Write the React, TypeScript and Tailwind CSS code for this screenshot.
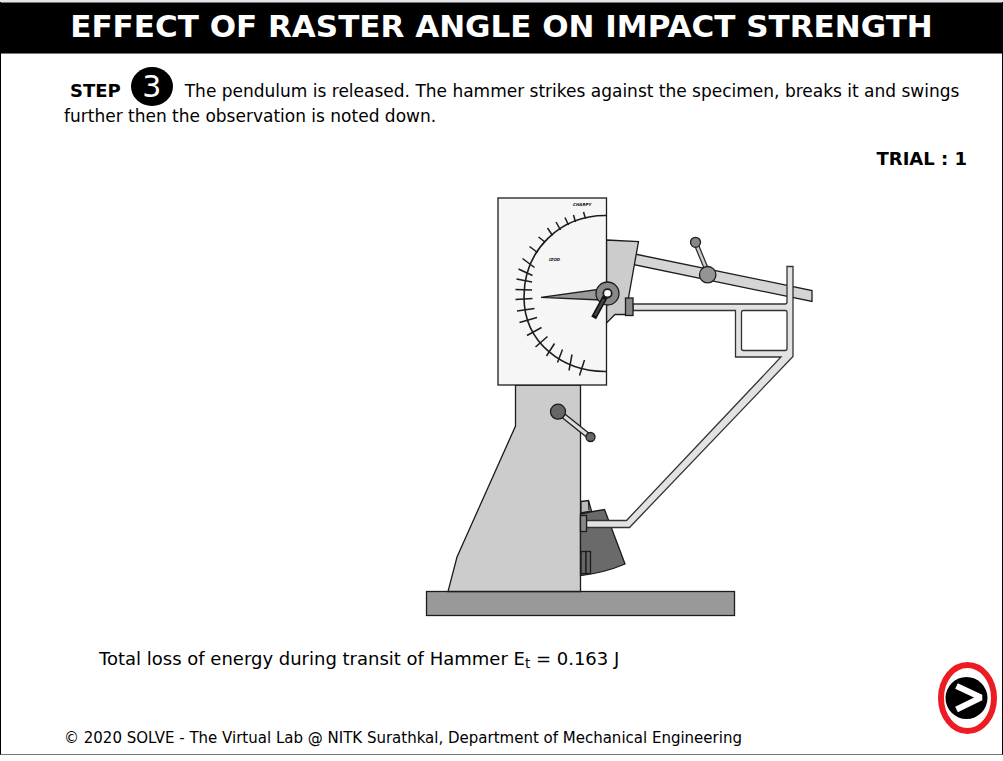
const ticks: [number, number, number, number][] = [
  [583.5, 212, 585.5, 218.5], [573.5, 215, 575.5, 222], [565, 217.5, 568.5, 225],
  [556, 222, 560.5, 230], [547.5, 228, 552.5, 235.5], [538.5, 237, 545, 242],
  [529.5, 246.5, 537.5, 252.5], [522.5, 258.5, 534.5, 267.5], [518.5, 269, 532.5, 275.5],
  [516.5, 279, 532, 282], [515.5, 289.5, 532, 290], [515.5, 299.5, 532.5, 298.5],
  [517, 311, 534.5, 308.5], [519.5, 322.5, 537, 317.5], [527, 335.5, 541.5, 327.5],
  [535.5, 347, 547.5, 336.5], [546.5, 356, 554.5, 343.5], [557.5, 362.5, 562.5, 349.5],
  [569, 370.5, 572, 354.5], [579.5, 375.5, 584.5, 360],
];

function ImpactTester() {
  return (
    <svg
      className="h-[430px] w-[400px] shrink-0"
      viewBox="420 190 400 430"
      role="img"
      aria-label="Pendulum impact testing machine"
      stroke="#1c1c1c"
      strokeWidth="1.3"
    >
      {/* Base and column */}
      <rect x="426.5" y="591.5" width="308" height="24" fill="#999" />
      <path d="M515.5 385V426L457 557L448 591.5H580.5V385Z" fill="#ccc" />

      {/* Hammer */}
      <path d="M580.5 514L590 512L604.5 509.5L625 564Q604 573 580.5 575.5Z" fill="#6a6a6a" />
      <path d="M581 501.5L588.5 500.5L591.5 511L581 513Z" fill="#bbb" />
      <path d="M588.5 501L589 510" fill="none" />
      <rect x="581" y="551.5" width="5" height="22" fill="#666" />
      <rect x="586" y="551.5" width="4.500" height="22" fill="#666" />

      {/* Inclined arm with its grip */}
      <path d="M635 254L812 290.500V301.500L633 264.500Z" fill="#d5d5d5" />
      <path d="M696.500 245L706 268" stroke="#292929" strokeWidth="5" />
      <path d="M696.500 245L706 268" stroke="#ccc" strokeWidth="2.500" />
      <circle cx="695.500" cy="242.300" r="5" fill="#888" />
      <circle cx="707.700" cy="274.700" r="8.200" fill="#949494" />

      {/* Pendulum frame */}
      <path
        fillRule="evenodd"
        fill="#e2e2e2"
        stroke="#333"
        d="M633 304H785Q787 304 787 302V266.500H793V356.500L629.500 527.500H586.500V520.500H626.500L781 357H735.500V310.500H633ZM743.500 310.500H785.500Q787 310.500 787 312V348.500Q787 350.500 785 350.500H743.500Q741.500 350.500 741.500 348.500V312Q741.500 310.500 743.500 310.500Z"
      />
      <rect x="580.500" y="515.500" width="6" height="16" fill="#888" />

      {/* Dial head */}
      <path d="M606.500 240L638.500 241.500L625.500 314.500H615L606.500 323Z" fill="#ccc" />
      <rect x="625.500" y="298" width="7.500" height="17.500" fill="#888" />
      <rect x="498" y="198" width="108.500" height="187" fill="#f6f6f6" />
      <path d="M606.500 215.500C561 215 524 249 524 297C524 343 563 372 606.500 371.500" fill="none" strokeWidth="1.600" />
      {ticks.map(([x1, y1, x2, y2]) => (
        <line key={`${x1}-${y1}`} x1={x1} y1={y1} x2={x2} y2={y2} strokeWidth="1.500" />
      ))}
      <g fill="#111" stroke="none" className="font-['DejaVu_Sans',sans-serif] text-[4px] font-bold italic">
        <text x="573" y="206">CHARPY</text>
        <text x="549" y="261">IZOD</text>
      </g>
      <path d="M541 297.300L601 289V300Z" fill="#999" />
      <circle cx="607.500" cy="293.500" r="11.500" fill="#888" />
      <path d="M604 299L595 315.500" stroke="#111" strokeWidth="5.500" strokeLinecap="square" />
      <path d="M604 299L595 315.500" stroke="#444" strokeWidth="2.500" />
      <circle cx="607.500" cy="293.300" r="4.200" fill="#fff" strokeWidth="1.800" />

      {/* Column lever */}
      <path d="M560 413L590 437" stroke="#222" strokeWidth="6" />
      <path d="M560 413L590 437" stroke="#ddd" strokeWidth="3.200" />
      <circle cx="558" cy="411.700" r="7.500" fill="#666" />
      <circle cx="590.500" cy="437" r="4.500" fill="#666" />
    </svg>
  );
}

export default function App() {
  return (
    <div className="border-t-2 border-[#e3e5ea] bg-white font-['DejaVu_Sans',Verdana,sans-serif] text-black">
      <div className="border border-t-0 border-black border-b-[#777]">
        <header className="border-y border-[#777] bg-black px-4 pb-1 text-center text-white">
          <h1 className="text-[31px] font-bold leading-[46px]">EFFECT OF RASTER ANGLE ON IMPACT STRENGTH</h1>
        </header>
        <main>
          <p className="ml-[63px] mr-2 mt-[21px] text-[17px] leading-[25px]">
            <strong className="ml-1.5 mr-2.5 text-lg leading-[25px]">STEP</strong>
            <span className="-my-2 mr-3 inline-block h-[39px] w-[42px] rounded-[50%] bg-black text-center text-[30px] leading-[39px] text-white">3</span>
            The pendulum is released. The hammer strikes against the specimen, breaks it and swings further then the observation is noted down.
          </p>
          <p className="mr-[35px] mt-4 text-right text-lg font-bold leading-7">TRIAL : 1</p>
          <figure className="mt-[17px] flex justify-center pl-[237px]">
            <ImpactTester />
          </figure>
        </main>
        <div className="mt-[25px] flex items-start justify-between pr-1">
          <div className="flex flex-col gap-[53px] pb-1">
            <p className="pl-[98px] text-lg leading-7">
              Total loss of energy during transit of Hammer E<sub>t</sub> = 0.163 J
            </p>
            <footer className="pl-[63px] text-[15px] leading-6">
              © 2020 SOLVE - The Virtual Lab @ NITK Surathkal, Department of Mechanical Engineering
            </footer>
          </div>
          <button type="button" aria-label="Next" className="mt-[17px] cursor-pointer">
            <svg className="h-[72px] w-[60px]" viewBox="0 0 60 72">
              <ellipse cx="29.500" cy="36" rx="26.500" ry="33" fill="#fff" stroke="#ed1c24" strokeWidth="6" />
              <circle cx="28.500" cy="36" r="21" fill="#000" />
              <path d="M18.500 24L43 35.500L18.500 47.500" fill="none" stroke="#fff" strokeWidth="6" strokeLinejoin="bevel" />
            </svg>
          </button>
        </div>
      </div>
    </div>
  );
}
